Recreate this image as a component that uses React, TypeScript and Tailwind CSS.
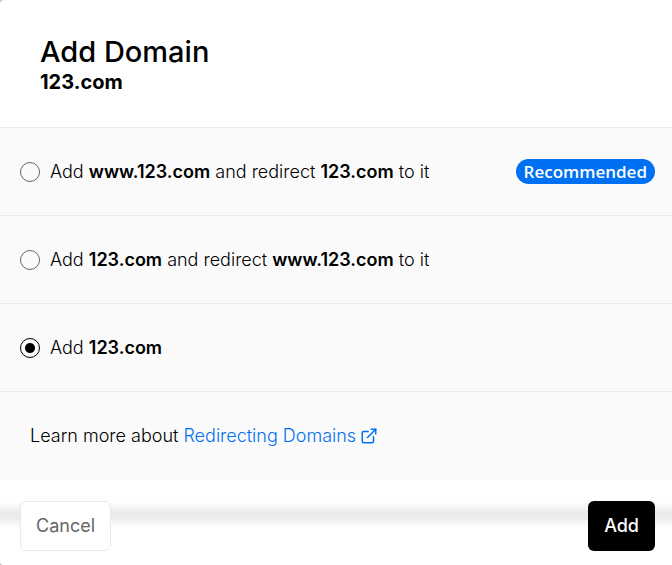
import { useState } from "react";
import type { ReactNode } from "react";

const options: { id: string; label: ReactNode; recommended?: boolean }[] = [
  {
    id: "www",
    label: (
      <>
        Add <b className="font-semibold">www.123.com</b> and redirect <b className="font-semibold">123.com</b> to it
      </>
    ),
    recommended: true,
  },
  {
    id: "apex",
    label: (
      <>
        Add <b className="font-semibold">123.com</b> and redirect <b className="font-semibold">www.123.com</b> to it
      </>
    ),
  },
  {
    id: "only",
    label: (
      <>
        Add <b className="font-semibold">123.com</b>
      </>
    ),
  },
];

function ExternalIcon() {
  return (
    <svg
      className="ml-1 size-[18px] shrink-0"
      viewBox="0 0 24 24"
      fill="none"
      stroke="currentColor"
      strokeWidth="2"
      strokeLinecap="round"
      strokeLinejoin="round"
      aria-hidden="true"
    >
      <path d="M18 13v6a2 2 0 01-2 2H5a2 2 0 01-2-2V8a2 2 0 012-2h6" />
      <path d="M15 3h6v6" />
      <path d="M10 14L21 3" />
    </svg>
  );
}

export default function App() {
  const [selected, setSelected] = useState("only");

  return (
    <div className="bg-[#bdbdbd] font-['Inter',sans-serif] text-black">
      <main className="overflow-hidden rounded-l-sm bg-white">
        <header className="px-10 pt-9 pb-[30px]">
          <h1 className="text-[29px] leading-8 font-medium">Add Domain</h1>
          <p className="text-xl leading-[29px] font-bold">123.com</p>
        </header>

        <div className="bg-[#fafafa] text-lg font-light">
          {options.map((option) => (
            <label
              key={option.id}
              className="flex h-[88px] items-center border-t border-[#eaeaea] pr-[17px] pl-5"
            >
              <input
                type="radio"
                name="redirect"
                checked={selected === option.id}
                onChange={() => setSelected(option.id)}
                className="mr-2.5 size-5 shrink-0 appearance-none rounded-full border border-[#666] bg-[#fafafa] checked:border-black checked:bg-[radial-gradient(circle,#000_4.5px,transparent_5.5px)]"
              />
              <span>{option.label}</span>
              {option.recommended && (
                <span className="ml-auto rounded-full bg-[#0070f3] px-2 font-['Open_Sans',sans-serif] text-[17px] leading-[25px] font-semibold text-white">
                  Recommended
                </span>
              )}
            </label>
          ))}
          <p className="flex h-[89px] items-center border-t border-[#eaeaea] px-[30px]">
            <span>Learn more about&nbsp;</span>
            <a href="#redirecting-domains" className="flex items-center text-[#0070f3]">
              Redirecting Domains
              <ExternalIcon />
            </a>
          </p>
        </div>

        <footer className="flex justify-between bg-[linear-gradient(to_bottom,#fff_22px,#ebebeb_32px,#ebebeb_37px,#fff_48px)] pt-[21px] pr-[17px] pb-3.5 pl-5">
          <button
            type="button"
            className="h-[50px] rounded-md border border-[#eaeaea] bg-white px-[15px] text-lg text-[#666]"
          >
            Cancel
          </button>
          <button type="button" className="h-[50px] rounded-md bg-black px-4 text-lg font-medium text-white">
            Add
          </button>
        </footer>
      </main>
    </div>
  );
}
